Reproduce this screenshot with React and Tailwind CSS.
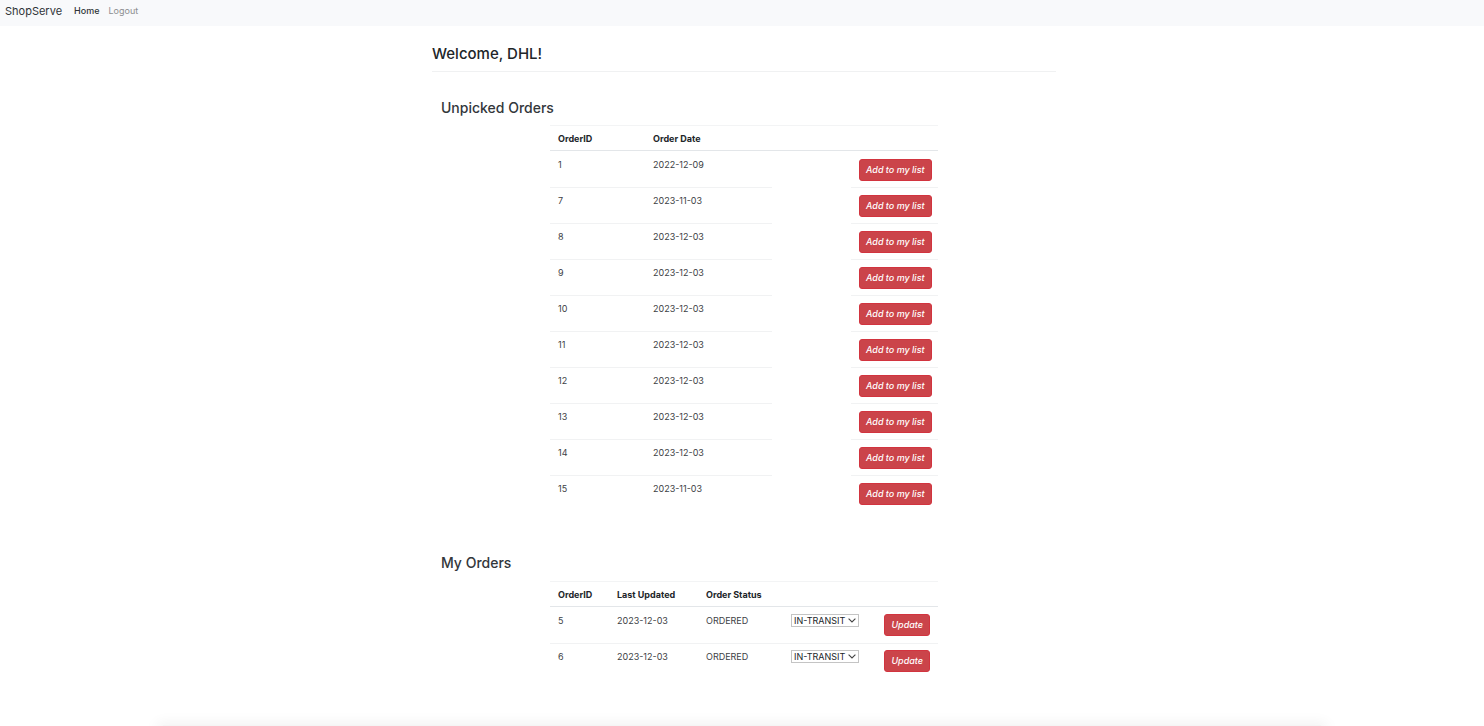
const unpicked = [
  ['1', '2022-12-09'],
  ['7', '2023-11-03'],
  ['8', '2023-12-03'],
  ['9', '2023-12-03'],
  ['10', '2023-12-03'],
  ['11', '2023-12-03'],
  ['12', '2023-12-03'],
  ['13', '2023-12-03'],
  ['14', '2023-12-03'],
  ['15', '2023-11-03'],
];

const mine = [
  ['5', '2023-12-03', 'ORDERED'],
  ['6', '2023-12-03', 'ORDERED'],
];

const tableClass =
  'mx-auto w-full max-w-[388px] table-fixed border-separate border-spacing-0 text-left text-[9px] leading-3 text-[#3d4145]';
const th =
  'h-[26px] border-t border-b border-t-[#f3f4f5] border-b-[#e3e6e9] px-2 pt-[2px] pb-0 align-middle font-bold text-[#212529]';
const line = 'border-t border-[#f1f2f3]';
const blank = 'border-t border-transparent';
const td = 'h-9 px-2 pt-[7px] pb-0 align-top';
const controlTd = 'h-9 px-2 pt-[6px] pb-0 align-top';

function ActionButton({ children }) {
  return (
    <button
      type="button"
      className="h-[22px] rounded-[3px] border border-[#d2343f] bg-[#cb444a] px-[6px] text-[9px] leading-3 font-medium whitespace-nowrap text-white italic"
    >
      {children}
    </button>
  );
}

function Chevron() {
  return (
    <svg
      viewBox="0 0 8 5"
      className="pointer-events-none absolute top-1 right-[3px] h-[5px] w-2"
      fill="none"
      stroke="#444"
      strokeWidth="1.1"
      aria-hidden="true"
    >
      <path d="M0.6 0.6 L4 4 L7.4 0.6" />
    </svg>
  );
}

function SectionTitle({ children }) {
  return <h2 className="px-[9px] text-[14px] leading-5 font-medium text-[#33373b]">{children}</h2>;
}

export default function App() {
  return (
    <div className="flex min-h-screen flex-col overflow-hidden bg-white font-['Inter','Liberation_Sans',sans-serif] text-[#212529]">
      <nav className="flex h-[26px] items-center bg-[#f8f9fb] px-[5px] pb-[5px]">
        <a href="#" className="mr-3 text-[11px] leading-4 text-[#303438]">ShopServe</a>
        <a href="#" className="mr-[9px] text-[9px] leading-4 font-medium text-[#303438]">Home</a>
        <a href="#" className="text-[9px] leading-4 text-[#8c8e90]">Logout</a>
      </nav>

      <main className="w-full pl-1">
        <div className="mx-auto w-full max-w-[624px]">
          <header className="border-b border-[#f0f1f2] pt-[18px] pb-[7px]">
            <h1 className="text-[15px] leading-5 font-medium">Welcome, DHL!</h1>
          </header>

          <section className="pt-[26px]">
            <SectionTitle>Unpicked Orders</SectionTitle>
            <div className="pt-[7px]">
              <table className={tableClass}>
                <colgroup>
                  <col className="w-[95px]" />
                  <col className="w-[127px]" />
                  <col className="w-[79px]" />
                  <col className="w-[87px]" />
                </colgroup>
                <thead>
                  <tr>
                    <th className={th}>OrderID</th>
                    <th className={th}>Order Date</th>
                    <th className={th}></th>
                    <th className={th}></th>
                  </tr>
                </thead>
                <tbody>
                  {unpicked.map(([id, date], i) => (
                    <tr key={id}>
                      <td className={`${td} ${i ? line : blank}`}>{id}</td>
                      <td className={`${td} ${i ? line : blank}`}>{date}</td>
                      <td className={`${td} ${blank}`}></td>
                      <td className={`${td} text-right ${i ? line : blank}`}>
                        <ActionButton>Add to my list</ActionButton>
                      </td>
                    </tr>
                  ))}
                </tbody>
              </table>
            </div>
          </section>

          <section className="pt-[42px]">
            <SectionTitle>My Orders</SectionTitle>
            <div className="pt-2">
              <table className={tableClass}>
                <colgroup>
                  <col className="w-[59px]" />
                  <col className="w-[89px]" />
                  <col className="w-[85px]" />
                  <col className="w-[93px]" />
                  <col className="w-[62px]" />
                </colgroup>
                <thead>
                  <tr>
                    <th className={th}>OrderID</th>
                    <th className={th}>Last Updated</th>
                    <th className={th}>Order Status</th>
                    <th className={th}></th>
                    <th className={th}></th>
                  </tr>
                </thead>
                <tbody>
                  {mine.map(([id, date, status], i) => (
                    <tr key={id}>
                      <td className={`${td} ${i ? line : blank}`}>{id}</td>
                      <td className={`${td} ${i ? line : blank}`}>{date}</td>
                      <td className={`${td} ${i ? line : blank}`}>{status}</td>
                      <td className={`${controlTd} ${i ? line : blank}`}>
                        <div className="relative w-[68px]">
                          <select
                            aria-label={`New status for order ${id}`}
                            className="block h-[13px] w-full appearance-none border border-[#c4c4c4] bg-white pl-[2px] text-[9px] leading-[11px] text-[#212529]"
                          >
                            <option>IN-TRANSIT</option>
                            <option>DELIVERED</option>
                          </select>
                          <Chevron />
                        </div>
                      </td>
                      <td className={`${controlTd} text-right ${i ? line : blank}`}>
                        <ActionButton>Update</ActionButton>
                      </td>
                    </tr>
                  ))}
                </tbody>
              </table>
            </div>
          </section>
        </div>
      </main>

      <div className="mx-[11%] mt-auto h-px bg-[#f5f5f5] shadow-[0_4px_14px_6px_rgba(0,0,0,0.06)]" />
    </div>
  );
}
